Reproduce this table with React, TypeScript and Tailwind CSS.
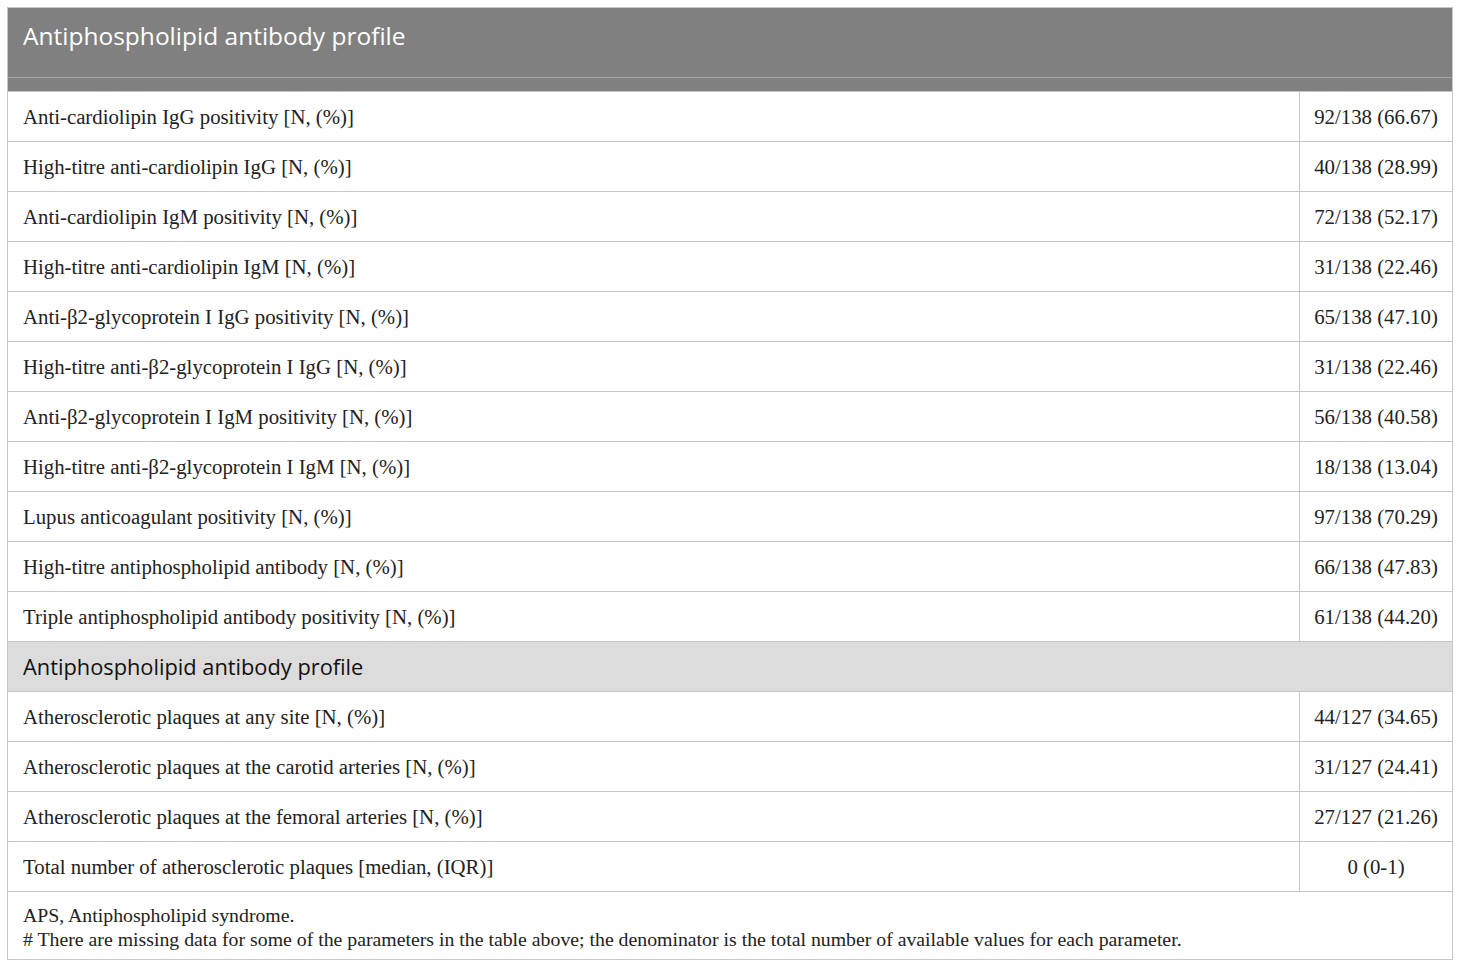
const rows1: [string, string][] = [
  ['Anti-cardiolipin IgG positivity [N, (%)]', '92/138 (66.67)'],
  ['High-titre anti-cardiolipin IgG [N, (%)]', '40/138 (28.99)'],
  ['Anti-cardiolipin IgM positivity [N, (%)]', '72/138 (52.17)'],
  ['High-titre anti-cardiolipin IgM [N, (%)]', '31/138 (22.46)'],
  ['Anti-β2-glycoprotein I IgG positivity [N, (%)]', '65/138 (47.10)'],
  ['High-titre anti-β2-glycoprotein I IgG [N, (%)]', '31/138 (22.46)'],
  ['Anti-β2-glycoprotein I IgM positivity [N, (%)]', '56/138 (40.58)'],
  ['High-titre anti-β2-glycoprotein I IgM [N, (%)]', '18/138 (13.04)'],
  ['Lupus anticoagulant positivity [N, (%)]', '97/138 (70.29)'],
  ['High-titre antiphospholipid antibody [N, (%)]', '66/138 (47.83)'],
  ['Triple antiphospholipid antibody positivity [N, (%)]', '61/138 (44.20)'],
]

const rows2: [string, string][] = [
  ['Atherosclerotic plaques at any site [N, (%)]', '44/127 (34.65)'],
  ['Atherosclerotic plaques at the carotid arteries [N, (%)]', '31/127 (24.41)'],
  ['Atherosclerotic plaques at the femoral arteries [N, (%)]', '27/127 (21.26)'],
  ['Total number of atherosclerotic plaques [median, (IQR)]', '0 (0-1)'],
]

function Row({ label, value }: { label: string; value: string }) {
  return (
    <tr className="h-[50px]">
      <td className="border border-[#c6c6c6] pl-[15px] text-left align-middle">{label}</td>
      <td className="border border-[#c6c6c6] text-center align-middle">{value}</td>
    </tr>
  )
}

export default function App() {
  return (
    <div className="bg-white min-h-[966px] pt-[7px] pl-[7px]">
      <table className="w-[1446px] border-collapse text-[20.8px] leading-[24px] text-[#222] font-['Liberation_Serif',serif]">
        <colgroup>
          <col className="w-[1293px]" />
          <col className="w-[153px]" />
        </colgroup>
        <thead>
          {/* Title band */}
          <tr className="h-[70px] bg-[#808080]">
            <th
              colSpan={2}
              className="border-x border-t border-[#c6c6c6] pl-[15px] pb-[14px] text-left align-middle font-normal text-white text-[24.5px] font-['Open_Sans',sans-serif]"
            >
              Antiphospholipid antibody profile
            </th>
          </tr>
          <tr className="h-[14px] bg-[#808080]">
            <th colSpan={2} className="border-t border-t-[#a3a3a3] border-x border-x-[#c6c6c6]" />
          </tr>
        </thead>
        <tbody>
          {rows1.map(([l, v]) => (
            <Row key={l} label={l} value={v} />
          ))}
          {/* Section header */}
          <tr className="h-[50px] bg-[#dcdcdc]">
            <td
              colSpan={2}
              className="border border-[#c6c6c6] pl-[15px] text-left align-middle text-[21.8px] text-[#111] font-['Open_Sans',sans-serif]"
            >
              Antiphospholipid antibody profile
            </td>
          </tr>
          {rows2.map(([l, v]) => (
            <Row key={l} label={l} value={v} />
          ))}
          <tr>
            <td colSpan={2} className="border border-[#c6c6c6] pl-[15px] pt-[11px] pb-[8px] text-[19.8px] leading-[24px] text-left">
              <div>APS, Antiphospholipid syndrome.</div>
              <div>
                # There are missing data for some of the parameters in the table above; the denominator is the total number of available values for each parameter.
              </div>
            </td>
          </tr>
        </tbody>
      </table>
    </div>
  )
}
